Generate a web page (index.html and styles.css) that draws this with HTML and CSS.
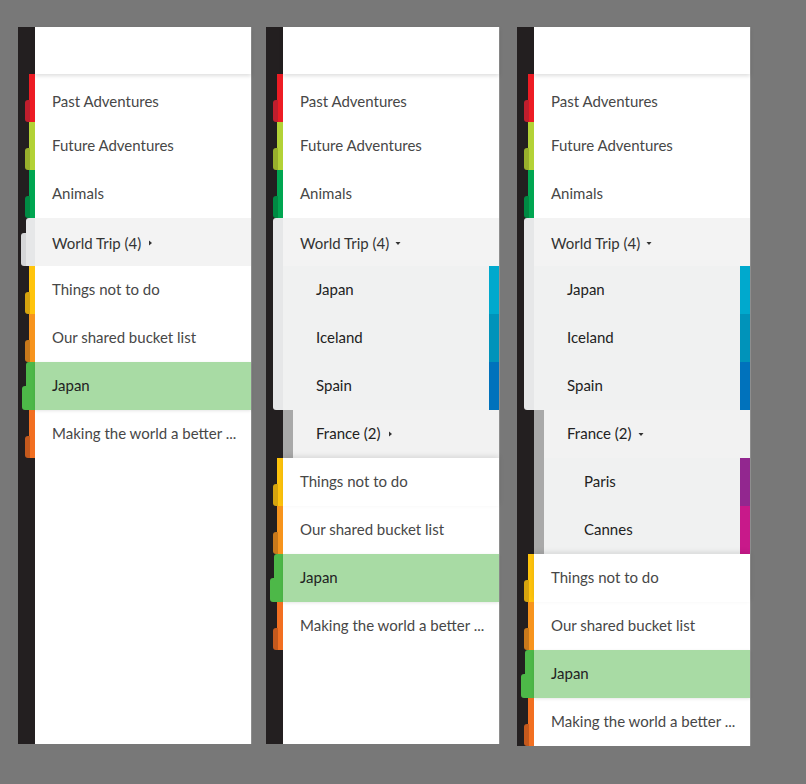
FILE: index.html
```html
<!DOCTYPE html>
<html>
<head>
<meta charset="utf-8">
<link rel="stylesheet" href="styles.css">
</head>
<body>
<div class="stage">

  <!-- Panel 1 -->
  <div class="panel p1">
    <div class="row"><div class="gutter"></div><div class="cell header"></div></div>
    <div class="row c-red"><div class="gutter"><span class="mk-top"></span><span class="mk-tab"></span></div><div class="cell first"><span class="label">Past Adventures</span></div></div>
    <div class="row c-lime"><div class="gutter"><span class="mk-top"></span><span class="mk-tab"></span></div><div class="cell"><span class="label">Future Adventures</span></div></div>
    <div class="row c-green"><div class="gutter"><span class="mk-top"></span><span class="mk-tab"></span></div><div class="cell"><span class="label">Animals</span></div></div>
    <div class="row c-gray active"><div class="gutter"><span class="mk-top"></span><span class="mk-tab"></span></div><div class="cell parent"><span class="label">World Trip (4)<svg class="caret" width="5" height="6" viewBox="0 0 5 6"><path d="M1 0.5 L4 3 L1 5.5Z"/></svg></span></div></div>
    <div class="row c-yellow"><div class="gutter"><span class="mk-top"></span><span class="mk-tab"></span></div><div class="cell"><span class="label">Things not to do</span></div></div>
    <div class="row c-orange"><div class="gutter"><span class="mk-top"></span><span class="mk-tab"></span></div><div class="cell"><span class="label">Our shared bucket list</span></div></div>
    <div class="row c-sel sel"><div class="gutter"><span class="mk-top"></span><span class="mk-tab"></span></div><div class="cell selected"><span class="label">Japan</span></div></div>
    <div class="row c-red2"><div class="gutter"><span class="mk-top"></span><span class="mk-tab"></span></div><div class="cell"><span class="label">Making the world a better ...</span></div></div>
  </div>

  <!-- Panel 2 -->
  <div class="panel p2">
    <div class="row"><div class="gutter"></div><div class="cell header"></div></div>
    <div class="row c-red"><div class="gutter"><span class="mk-top"></span><span class="mk-tab"></span></div><div class="cell first"><span class="label">Past Adventures</span></div></div>
    <div class="row c-lime"><div class="gutter"><span class="mk-top"></span><span class="mk-tab"></span></div><div class="cell"><span class="label">Future Adventures</span></div></div>
    <div class="row c-green"><div class="gutter"><span class="mk-top"></span><span class="mk-tab"></span></div><div class="cell"><span class="label">Animals</span></div></div>
    <div class="group">
      <div class="group-gutter"><span class="group-mark"></span></div>
      <div class="group-rows">
        <div class="cell parent"><span class="label">World Trip (4)<svg class="caret down" width="6" height="5" viewBox="0 0 6 5"><path d="M0.5 1 L5.5 1 L3 4Z"/></svg></span></div>
        <div class="child"><span class="label">Japan</span><span class="cbar b-japan"></span></div>
        <div class="child"><span class="label">Iceland</span><span class="cbar b-iceland"></span></div>
        <div class="child"><span class="label">Spain</span><span class="cbar b-spain"></span></div>
        <div class="sub">
          <span class="sub-bar"></span>
          <div class="sub-rows">
            <div class="sub-parent"><span class="label">France (2)<svg class="caret" width="5" height="6" viewBox="0 0 5 6"><path d="M1 0.5 L4 3 L1 5.5Z"/></svg></span></div>
          </div>
        </div>
      </div>
    </div>
    <div class="row c-yellow"><div class="gutter"><span class="mk-top"></span><span class="mk-tab"></span></div><div class="cell after-group"><span class="label">Things not to do</span></div></div>
    <div class="row c-orange"><div class="gutter"><span class="mk-top"></span><span class="mk-tab"></span></div><div class="cell"><span class="label">Our shared bucket list</span></div></div>
    <div class="row c-sel sel"><div class="gutter"><span class="mk-top"></span><span class="mk-tab"></span></div><div class="cell selected"><span class="label">Japan</span></div></div>
    <div class="row c-red2"><div class="gutter"><span class="mk-top"></span><span class="mk-tab"></span></div><div class="cell"><span class="label">Making the world a better ...</span></div></div>
  </div>

  <!-- Panel 3 -->
  <div class="panel p3">
    <div class="row"><div class="gutter"></div><div class="cell header"></div></div>
    <div class="row c-red"><div class="gutter"><span class="mk-top"></span><span class="mk-tab"></span></div><div class="cell first"><span class="label">Past Adventures</span></div></div>
    <div class="row c-lime"><div class="gutter"><span class="mk-top"></span><span class="mk-tab"></span></div><div class="cell"><span class="label">Future Adventures</span></div></div>
    <div class="row c-green"><div class="gutter"><span class="mk-top"></span><span class="mk-tab"></span></div><div class="cell"><span class="label">Animals</span></div></div>
    <div class="group">
      <div class="group-gutter"><span class="group-mark"></span></div>
      <div class="group-rows">
        <div class="cell parent"><span class="label">World Trip (4)<svg class="caret down" width="6" height="5" viewBox="0 0 6 5"><path d="M0.5 1 L5.5 1 L3 4Z"/></svg></span></div>
        <div class="child"><span class="label">Japan</span><span class="cbar b-japan"></span></div>
        <div class="child"><span class="label">Iceland</span><span class="cbar b-iceland"></span></div>
        <div class="child"><span class="label">Spain</span><span class="cbar b-spain"></span></div>
        <div class="sub">
          <span class="sub-bar"></span>
          <div class="sub-rows">
            <div class="sub-parent"><span class="label">France (2)<svg class="caret down" width="6" height="5" viewBox="0 0 6 5"><path d="M0.5 1 L5.5 1 L3 4Z"/></svg></span></div>
            <div class="sub-child"><span class="label">Paris</span><span class="cbar b-paris"></span></div>
            <div class="sub-child"><span class="label">Cannes</span><span class="cbar b-cannes"></span></div>
          </div>
        </div>
      </div>
    </div>
    <div class="row c-yellow"><div class="gutter"><span class="mk-top"></span><span class="mk-tab"></span></div><div class="cell after-group"><span class="label">Things not to do</span></div></div>
    <div class="row c-orange"><div class="gutter"><span class="mk-top"></span><span class="mk-tab"></span></div><div class="cell"><span class="label">Our shared bucket list</span></div></div>
    <div class="row c-sel sel"><div class="gutter"><span class="mk-top"></span><span class="mk-tab"></span></div><div class="cell selected"><span class="label">Japan</span></div></div>
    <div class="row c-red2"><div class="gutter"><span class="mk-top"></span><span class="mk-tab"></span></div><div class="cell"><span class="label">Making the world a better ...</span></div></div>
  </div>

</div>
</body>
</html>
```

FILE: styles.css
```css
html, body {
  margin: 0;
  padding: 0;
}
body {
  background: #787878;
  font-family: "Lato", "Open Sans", "Liberation Sans", sans-serif;
  font-size: 15px;
  width: 806px;
  height: 784px;
  overflow: hidden;
}
.stage {
  display: flex;
  align-items: flex-start;
  padding: 27px 0 0 18px;
}
.panel {
  width: 233px;
  min-height: 717px;
  display: flex;
  flex-direction: column;
  background: linear-gradient(90deg, #231f20 17px, #ffffff 17px);
  box-shadow: 1px 0 0 #8e8e8e;
}
.p2 { margin-left: 15px; }
.p3 { margin-left: 18px; }

.row {
  display: flex;
  height: 48px;
}
.row:first-child { height: 47px; }

.gutter {
  width: 17px;
  flex: none;
  display: flex;
  flex-direction: column;
  align-items: flex-end;
}
.mk-top {
  display: block;
  width: 6px;
  height: 26px;
  background: var(--c);
}
.mk-tab {
  display: block;
  width: 10px;
  height: 22px;
  border-radius: 3px 0 0 3px;
  background: linear-gradient(90deg, var(--d) 5px, var(--c) 5px);
}
.sel .mk-top {
  width: 9px;
  height: 24px;
  border-radius: 3px 0 0 0;
}
.sel .mk-tab {
  width: 13px;
  height: 24px;
  background: var(--c);
}
.active .mk-top {
  width: 9px;
  height: 15px;
  border-radius: 3px 0 0 0;
}
.active .mk-tab {
  width: 14px;
  height: 33px;
  background: linear-gradient(90deg, #d5d6d8 5px, var(--c) 5px);
}

.c-red { --c: #ed1c24; --d: #bf1e2d; }
.c-lime { --c: #b3d236; --d: #98b02c; }
.c-green { --c: #00a651; --d: #008a43; }
.c-gray { --c: #e6e7e8; --d: #d5d6d8; }
.c-yellow { --c: #ffc40c; --d: #d6a40e; }
.c-orange { --c: #f7941d; --d: #c9791b; }
.c-sel { --c: #4db848; --d: #4db848; }
.c-red2 { --c: #f26f21; --d: #c4591d; }

.cell {
  width: 216px;
  flex: none;
  height: 48px;
  box-sizing: border-box;
  background: #ffffff;
  display: flex;
  align-items: center;
  padding: 0 0 0 17px;
  color: #474747;
}
.cell.first {
  padding-top: 7px;
}
.header {
  height: 47px;
  position: relative;
  z-index: 1;
  box-shadow: 0 2px 4px rgba(0, 0, 0, 0.13);
}
.parent {
  background: #f3f3f3;
  color: #333333;
  padding-top: 3px;
}
.selected {
  background: #a8dba4;
  color: #222222;
  position: relative;
  box-shadow: 0 1px 3px rgba(0, 0, 0, 0.1);
}
.after-group {
  position: relative;
  box-shadow: 0 -2px 5px rgba(0, 0, 0, 0.1);
}
.label {
  white-space: nowrap;
  display: flex;
  align-items: center;
  margin-bottom: 2px;
}
.caret {
  fill: #333333;
  margin-left: 7px;
  margin-top: 1px;
}
.caret.down {
  margin-left: 6px;
  margin-top: 2px;
}

/* expanded group */
.group {
  display: flex;
}
.group-gutter {
  width: 17px;
  flex: none;
  display: flex;
  justify-content: flex-end;
  align-items: flex-start;
}
.group-mark {
  display: block;
  width: 10px;
  height: 192px;
  background: #e6e7e8;
  border-radius: 3px 0 0 3px;
}
.group-rows {
  width: 216px;
  display: flex;
  flex-direction: column;
}
.child {
  height: 48px;
  box-sizing: border-box;
  display: flex;
  align-items: center;
  background: #f0f1f1;
  color: #222222;
}
.child .label {
  padding-left: 33px;
}
.cbar {
  margin-left: auto;
  width: 10px;
  align-self: stretch;
}
.b-japan { background: #00a9cd; }
.b-iceland { background: #0093ba; }
.b-spain { background: #0072bc; }
.b-paris { background: #92278f; }
.b-cannes { background: #c8198a; }

.sub {
  display: flex;
}
.sub-bar {
  width: 10px;
  flex: none;
  background: #a9a9a9;
}
.sub-rows {
  flex: 1;
  display: flex;
  flex-direction: column;
}
.sub-parent {
  height: 48px;
  box-sizing: border-box;
  display: flex;
  align-items: center;
  background: #f2f2f2;
  color: #222222;
  padding: 0 0 0 23px;
}
.sub-child {
  height: 48px;
  box-sizing: border-box;
  display: flex;
  align-items: center;
  background: #f0f1f1;
  color: #222222;
}
.sub-child .label {
  padding-left: 40px;
}
```
